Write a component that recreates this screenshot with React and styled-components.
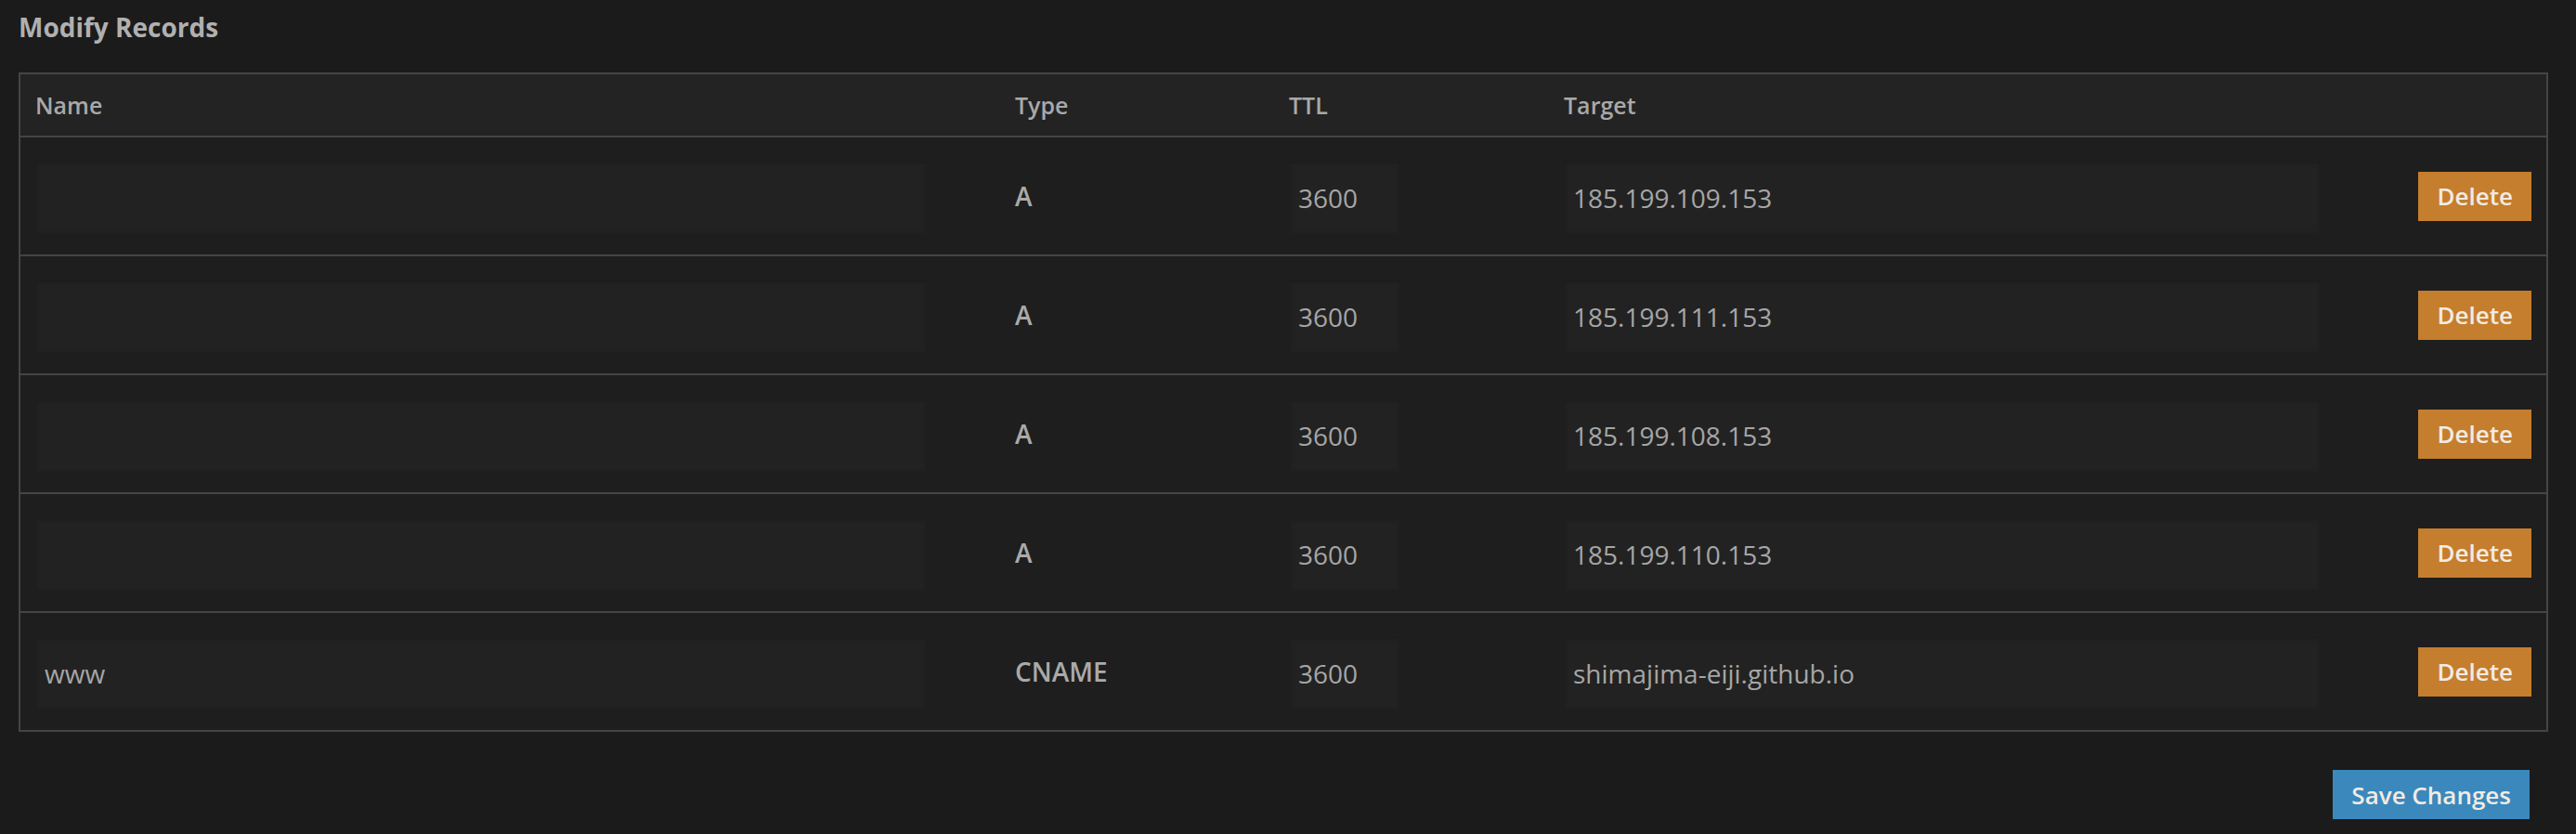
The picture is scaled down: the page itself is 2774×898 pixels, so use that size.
import React from 'react'
import styled, { createGlobalStyle } from 'styled-components'

const records = [
  { name: '', type: 'A', ttl: '3600', target: '185.199.109.153' },
  { name: '', type: 'A', ttl: '3600', target: '185.199.111.153' },
  { name: '', type: 'A', ttl: '3600', target: '185.199.108.153' },
  { name: '', type: 'A', ttl: '3600', target: '185.199.110.153' },
  { name: 'www', type: 'CNAME', ttl: '3600', target: 'shimajima-eiji.github.io' },
]

const App = () => {
  return (
    <Page>
      <GlobalStyle />
      <Title>Modify Records</Title>

      <Table>
        <HeaderRow>
          <HeadCell>Name</HeadCell>
          <HeadCell>Type</HeadCell>
          <HeadCell>TTL</HeadCell>
          <HeadCell>Target</HeadCell>
          <HeadCell />
        </HeaderRow>

        {records.map((r, i) => (
          <Row key={i} $last={i === records.length - 1}>
            <Field $width="960px" defaultValue={r.name} />
            <TypeLabel>{r.type}</TypeLabel>
            <Field $width="120px" defaultValue={r.ttl} />
            <Field $width="815px" defaultValue={r.target} />
            <Button $color="#c57e2d">Delete</Button>
          </Row>
        ))}
      </Table>

      <Footer>
        <Button $color="#3b88bc">Save Changes</Button>
      </Footer>
    </Page>
  )
}

export default App

const GlobalStyle = createGlobalStyle`
  html, body {
    margin: 0;
    padding: 0;
    background: #1b1b1b;
  }
  body {
    font-family: "Open Sans", "Noto Sans", sans-serif;
    color: #a8a8a8;
  }
`

const Page = styled.div`
  min-height: 898px;
  padding: 10px 30px 0 20px;
  box-sizing: border-box;
`

const Title = styled.h2`
  margin: 0 0 30px;
  font-size: 28px;
  line-height: 38px;
  font-weight: 700;
  color: #b0b0b0;
`

const Table = styled.div`
  border: 2px solid #454545;
  background: #1e1e1e;
`

const columns = `
  display: grid;
  grid-template-columns: 1055px 295px 296px 1fr auto;
  align-items: center;
  padding: 0 16px;
`

const HeaderRow = styled.div`
  ${columns}
  height: 66px;
  background: #232323;
  border-bottom: 2px solid #454545;
`

const HeadCell = styled.div`
  font-size: 25px;
  font-weight: 600;
  color: #a9a9a9;
`

const Row = styled.div`
  ${columns}
  height: 126px;
  border-bottom: ${p => (p.$last ? 'none' : '2px solid #454545')};
`

const Field = styled.input`
  width: ${p => p.$width};
  height: 78px;
  margin-top: 3px;
  box-sizing: border-box;
  padding: 0 10px;
  border: none;
  outline: none;
  background: #222222;
  box-shadow: inset 0 1px 4px rgba(0, 0, 0, 0.25);
  font-family: inherit;
  font-size: 28px;
  color: #a6a6a6;
`

const TypeLabel = styled.div`
  font-size: 28px;
  font-weight: 600;
  color: #aaaaaa;
`

const Button = styled.button`
  height: 53px;
  padding: 0 20px;
  border: none;
  background: ${p => p.$color};
  color: #f2ebe2;
  font-family: inherit;
  font-size: 26px;
  font-weight: 600;
  cursor: pointer;
`

const Footer = styled.div`
  display: flex;
  justify-content: flex-end;
  padding: 41px 20px 0 0;
`
